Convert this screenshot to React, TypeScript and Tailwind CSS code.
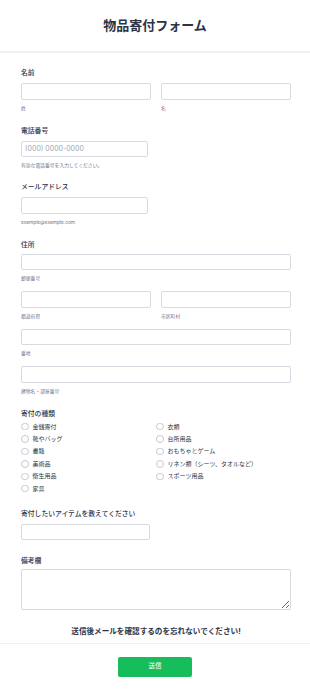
import React from 'react';

const font = { fontFamily: 'Inter, "Noto Sans CJK JP", sans-serif' };

function Label({ children }: { children: React.ReactNode }) {
  return (
    <label className="block text-[6.8px] leading-[8px] font-medium text-[#2c3345]">
      {children}
    </label>
  );
}

function Sub({ children }: { children: React.ReactNode }) {
  return <div className="mt-[5px] text-[4.8px] leading-[6px] text-[#6f768a]">{children}</div>;
}

function Input({ className = '', placeholder }: { className?: string; placeholder?: string }) {
  return (
    <input
      type="text"
      placeholder={placeholder}
      className={`block h-[16.5px] rounded-[2px] border border-[#d8dae1] bg-white px-[3px] text-[7px] text-[#2c3345] placeholder:text-[#a0a6b6] outline-none ${className}`}
    />
  );
}

function Radio({ label }: { label: string }) {
  return (
    <div className="flex h-[12.4px] items-center gap-[4px]">
      <span className="block h-[7.5px] w-[7.5px] shrink-0 rounded-full border border-[#c3c7d1] bg-white" />
      <span className="text-[6px] leading-[8px] text-[#2c3345] whitespace-nowrap">{label}</span>
    </div>
  );
}

export default function App() {
  const left = ['金銭寄付', '靴やバッグ', '書籍', '美術品', '衛生用品', '家具'];
  const right = ['衣類', '台所用品', 'おもちゃとゲーム', 'リネン類（シーツ、タオルなど）', 'スポーツ用品'];

  return (
    <div className="min-h-screen w-[310px] bg-white" style={font}>
      {/* ヘッダー */}
      <header className="flex h-[53px] items-center justify-center border-b-2 border-[#eff0f3]">
        <h1 className="text-[13px] font-bold text-[#2c3345]">物品寄付フォーム</h1>
      </header>

      <main className="pl-[21px] pr-[19px] pt-[16px]">
        {/* 名前 */}
        <Label>名前</Label>
        <div className="mt-[6px] grid grid-cols-2 gap-[10px]">
          <div>
            <Input className="w-full" />
            <Sub>姓</Sub>
          </div>
          <div>
            <Input className="w-full" />
            <Sub>名</Sub>
          </div>
        </div>

        {/* 電話番号 */}
        <div className="mt-[16px]">
          <Label>電話番号</Label>
          <Input className="mt-[6px] w-[127px]" placeholder="(000) 0000-0000" />
          <Sub>有効な電話番号を入力してください。</Sub>
        </div>

        {/* メールアドレス */}
        <div className="mt-[15px]">
          <Label>メールアドレス</Label>
          <Input className="mt-[6px] w-[127px]" />
          <Sub>example@example.com</Sub>
        </div>

        {/* 住所 */}
        <div className="mt-[16px]">
          <Label>住所</Label>
          <Input className="mt-[5px] w-full" />
          <Sub>郵便番号</Sub>
          <div className="mt-[10px] grid grid-cols-2 gap-[10px]">
            <div>
              <Input className="w-full" />
              <Sub>都道府県</Sub>
            </div>
            <div>
              <Input className="w-full" />
              <Sub>市区町村</Sub>
            </div>
          </div>
          <Input className="mt-[10px] w-full" />
          <Sub>番地</Sub>
          <Input className="mt-[10px] w-full" />
          <Sub>建物名・部屋番号</Sub>
        </div>

        {/* 寄付の種類 */}
        <div className="mt-[16px]">
          <Label>寄付の種類</Label>
          <div className="mt-[3px] grid grid-cols-2">
            <div>
              {left.map((l) => (
                <Radio key={l} label={l} />
              ))}
            </div>
            <div>
              {right.map((l) => (
                <Radio key={l} label={l} />
              ))}
            </div>
          </div>
        </div>

        {/* アイテム */}
        <div className="mt-[15px]">
          <Label>寄付したいアイテムを教えてください</Label>
          <Input className="mt-[6px] w-[129px]" />
        </div>

        {/* 備考欄 */}
        <div className="mt-[17px]">
          <Label>備考欄</Label>
          <textarea className="mt-[4px] block h-[41px] w-full rounded-[2px] border border-[#d8dae1] bg-white outline-none" />
        </div>

        <p className="mt-[17px] pb-[6px] text-center text-[7.6px] leading-[10px] font-bold text-[#2c3345]">
          送信後メールを確認するのを忘れないでください!
        </p>
      </main>

      {/* フッター */}
      <footer className="flex justify-center border-t border-[#eff0f3] pt-[13px] pb-[17px]">
        <button className="h-[20px] w-[74px] rounded-[2px] bg-[#18bd5b] text-[6.5px] text-white">
          送信
        </button>
      </footer>
    </div>
  );
}
